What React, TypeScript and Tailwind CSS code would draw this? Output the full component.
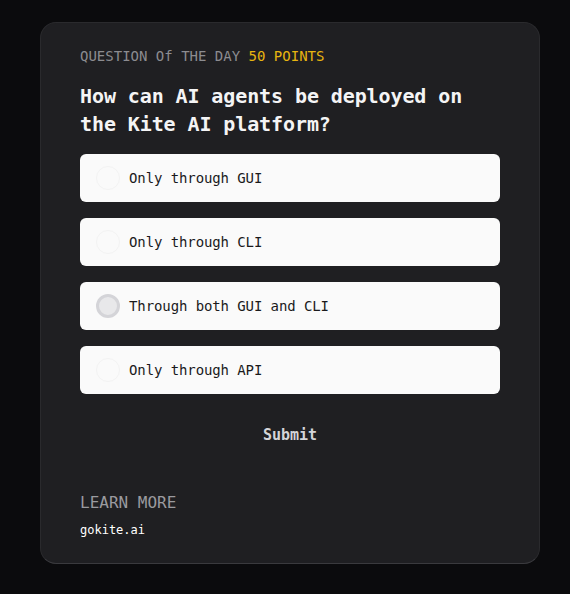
import React, { useState } from "react";

const options = [
  "Only through GUI",
  "Only through CLI",
  "Through both GUI and CLI",
  "Only through API",
];

export default function App() {
  const [selected, setSelected] = useState(2);
  return (
    <div
      className="min-h-[594px] w-[570px] bg-[#0b0b0d] pt-[22px] pl-10"
      style={{ fontFamily: '"DejaVu Sans Mono", "Liberation Mono", monospace' }}
    >
      <div className="w-[500px] rounded-2xl border border-[#2a2a2d] border-b-[#3a3a3e] bg-[#1f1f22] px-[39px] pt-[23px] pb-[25px]">
        <div className="text-[14px] leading-5 text-[#8c8c90]">
          QUESTION Of THE DAY <span className="text-[#e8b510]">50 POINTS</span>
        </div>
        <h1 className="mt-4 text-[20px] font-bold leading-7 tracking-[-0.1px] text-[#f4f4f5]">
          How can AI agents be deployed on the Kite AI platform?
        </h1>
        <div className="mt-4 flex flex-col gap-4">
          {options.map((o, i) => (
            <button
              key={o}
              onClick={() => setSelected(i)}
              className="flex h-12 items-center rounded-md bg-[#fafafa] pl-4 text-left"
            >
              {i === selected ? (
                <span className="h-6 w-6 shrink-0 rounded-full border-[3px] border-[#d4d4d8] bg-[#e8e8ea]" />
              ) : (
                <span className="h-6 w-6 shrink-0 rounded-full border border-[#f3f3f3]" />
              )}
              <span className="ml-[9px] text-[14px] tracking-[-0.1px] text-[#1a1a1c]">{o}</span>
            </button>
          ))}
        </div>
        <div className="mt-[21px] flex h-10 items-center justify-center">
          <span className="text-[15px] font-bold text-[#d4d4d8]">Submit</span>
        </div>
        <div className="mt-9 text-[16px] leading-6 text-[#9a9a9f]">LEARN MORE</div>
        <div className="mt-[7px] text-[12px] leading-4 text-white">gokite.ai</div>
      </div>
    </div>
  );
}
